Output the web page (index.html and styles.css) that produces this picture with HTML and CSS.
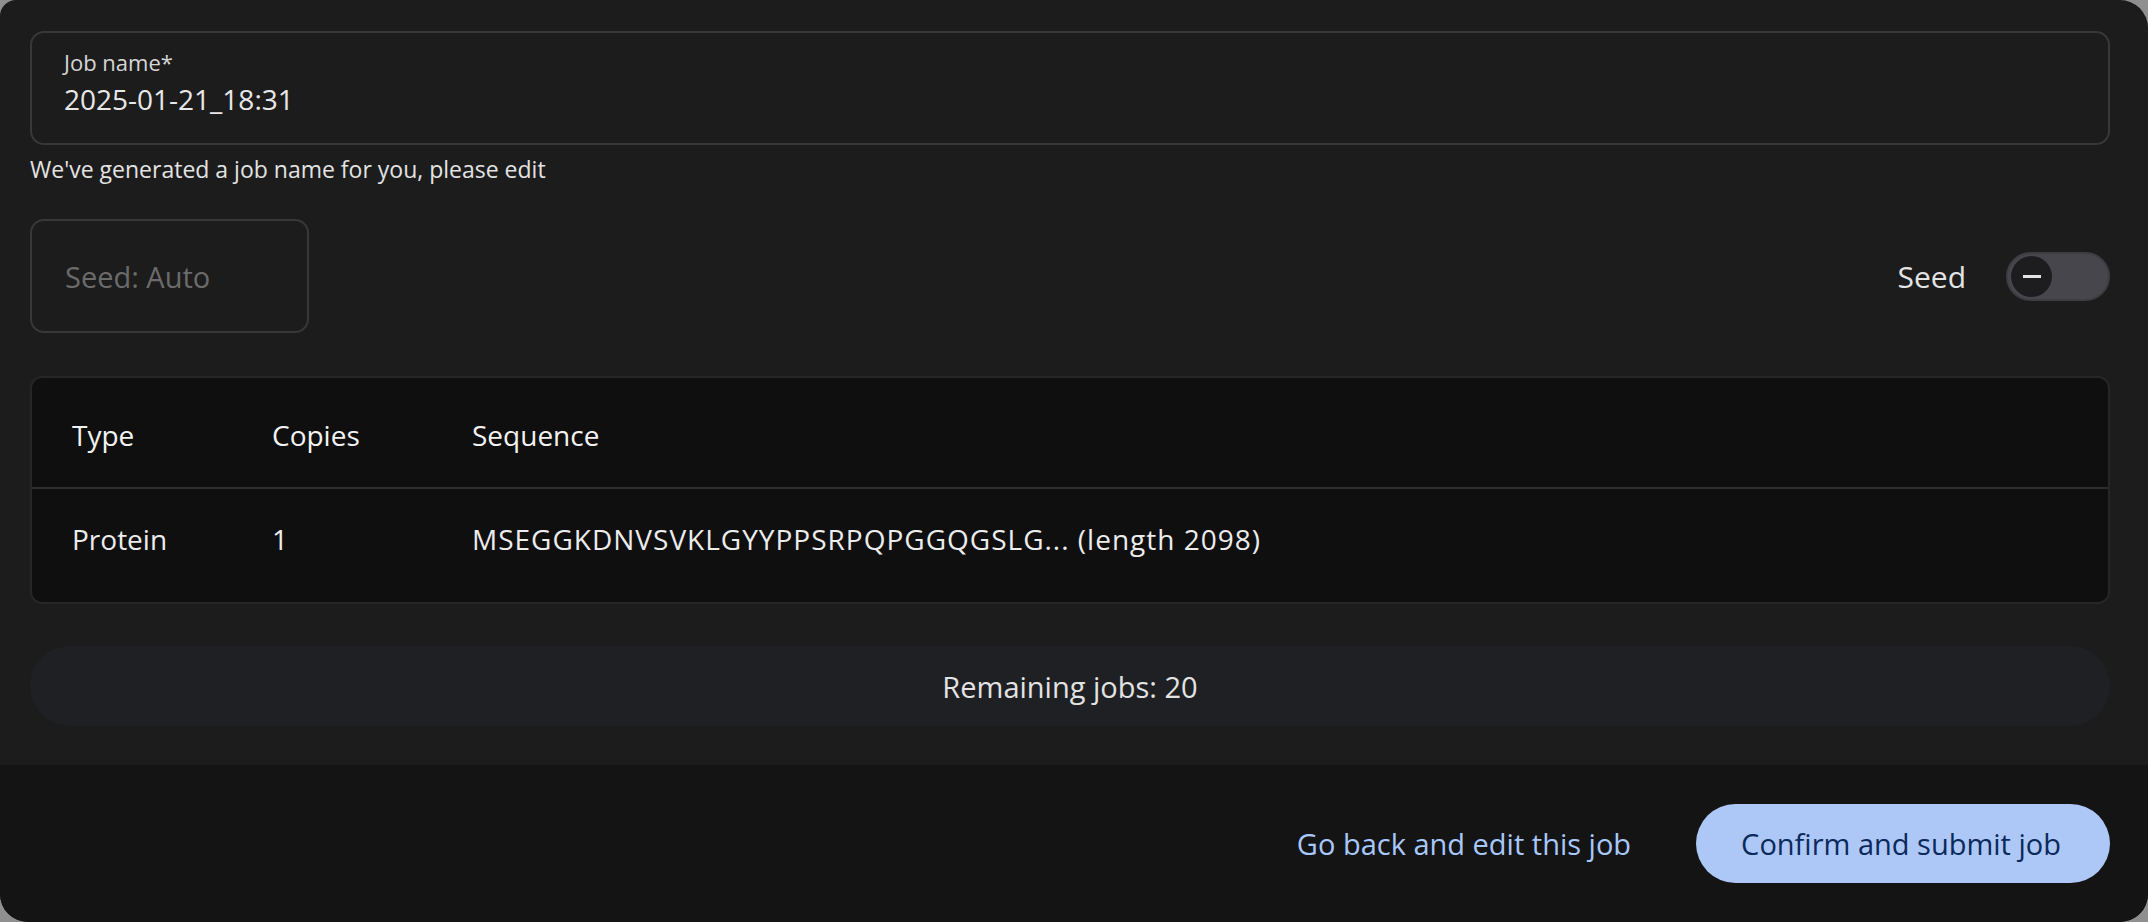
FILE: index.html
```html
<!DOCTYPE html>
<html lang="en">
<head>
    <meta charset="UTF-8">
    <title>Confirm job</title>
    <link rel="stylesheet" href="styles.css">
</head>
<body>
    <div class="dialog">
        <div class="dialog-body">
            <div class="field field-name">
                <div class="field-label">Job name*</div>
                <div class="field-value">2025-01-21_18:31</div>
            </div>
            <p class="helper">We've generated a job name for you, please edit</p>

            <div class="seed-row">
                <div class="field field-seed">
                    <span class="placeholder">Seed: Auto</span>
                </div>
                <div class="seed-switch">
                    <span class="seed-label">Seed</span>
                    <button class="switch" type="button" aria-label="Seed">
                        <span class="switch-handle">
                            <svg width="18" height="3" viewBox="0 0 18 3"><rect width="18" height="3" fill="#e3e3e3"/></svg>
                        </span>
                    </button>
                </div>
            </div>

            <div class="table-wrap">
                <table class="entities">
                    <thead>
                        <tr>
                            <th class="col-type">Type</th>
                            <th class="col-copies">Copies</th>
                            <th>Sequence</th>
                        </tr>
                    </thead>
                    <tbody>
                        <tr>
                            <td>Protein</td>
                            <td>1</td>
                            <td class="sequence">MSEGGKDNVSVKLGYYPPSRPQPGGQGSLG... (length 2098)</td>
                        </tr>
                    </tbody>
                </table>
            </div>

            <div class="remaining">Remaining jobs: 20</div>
        </div>

        <div class="dialog-footer">
            <button class="btn-text" type="button">Go back and edit this job</button>
            <button class="btn-filled" type="button">Confirm and submit job</button>
        </div>
    </div>
</body>
</html>
```

FILE: styles.css
```css
html, body {
    margin: 0;
    height: 100%;
}
body {
    background-color: #8f8f8f;
    font-family: "Open Sans", "Lato", sans-serif;
    color: #e3e3e3;
    overflow: hidden;
}
.dialog {
    height: 922px;
    display: flex;
    flex-direction: column;
    background-color: #1c1c1c;
    border-radius: 16px 28px 28px 28px;
    overflow: hidden;
}
.dialog-body {
    flex: 1;
    display: flex;
    flex-direction: column;
    padding: 31px 38px 39px 30px;
}

/* outlined fields */
.field {
    box-sizing: border-box;
    height: 114px;
    border: 2px solid #383838;
    border-radius: 14px;
}
.field-name {
    padding: 17px 32px 0;
}
.field-label {
    font-size: 22px;
    line-height: 24px;
    color: #d6d6d6;
}
.field-value {
    margin-top: 8px;
    font-size: 28px;
    line-height: 34px;
    color: #e8e8e8;
}
.helper {
    margin: 10px 0 0;
    font-size: 23px;
    line-height: 28px;
    color: #e3e3e3;
}

.seed-row {
    display: flex;
    align-items: center;
    justify-content: space-between;
    margin-top: 36px;
}
.field-seed {
    width: 279px;
    display: flex;
    align-items: center;
    padding-left: 33px;
}
.placeholder {
    font-size: 29px;
    color: #6b6b6b;
}
.seed-switch {
    display: flex;
    align-items: center;
    gap: 40px;
}
.seed-label {
    font-size: 30px;
}
.switch {
    box-sizing: border-box;
    width: 104px;
    height: 49px;
    padding: 0 0 0 3px;
    display: flex;
    align-items: center;
    background-color: #46464c;
    border: 2px solid #3d3d42;
    border-radius: 25px;
    cursor: pointer;
}
.switch-handle {
    width: 41px;
    height: 41px;
    border-radius: 50%;
    background-color: #1d1d20;
    display: flex;
    align-items: center;
    justify-content: center;
}
.switch-handle svg {
    display: block;
}

/* table */
.table-wrap {
    margin-top: 43px;
    background-color: #0f0f0f;
    border: 2px solid #262626;
    border-radius: 12px;
    overflow: hidden;
}
.entities {
    width: 100%;
    border-collapse: collapse;
    font-size: 28px;
    text-align: left;
}
.entities th,
.entities td {
    padding: 0 0 0 40px;
}
.entities th {
    height: 110px;
    padding-top: 4px;
    box-sizing: border-box;
    font-weight: 500;
    color: #f2f2f2;
    border-bottom: 2px solid #2e2e2e;
}
.entities td {
    height: 114px;
    padding-bottom: 14px;
    box-sizing: border-box;
    color: #ececec;
}
.entities .sequence {
    letter-spacing: 1px;
}
.col-type,
.col-copies {
    width: 200px;
}

.remaining {
    margin-top: 42px;
    height: 80px;
    border-radius: 40px;
    background-color: #1f2023;
    display: flex;
    align-items: center;
    justify-content: center;
    font-size: 29px;
    color: #e3e3e3;
}

/* footer */
.dialog-footer {
    height: 158px;
    box-sizing: border-box;
    display: flex;
    align-items: center;
    justify-content: flex-end;
    gap: 41px;
    padding-right: 38px;
    background-color: #141414;
}
.dialog-footer button {
    font-family: inherit;
    font-size: 29px;
    border: none;
    cursor: pointer;
}
.btn-text {
    background: none;
    color: #a8c7fa;
    padding: 0 24px;
    height: 79px;
}
.btn-filled {
    height: 79px;
    padding: 0 49px 0 45px;
    border-radius: 40px;
    background-color: #adc8f6;
    color: #0b2a5c;
}
```
